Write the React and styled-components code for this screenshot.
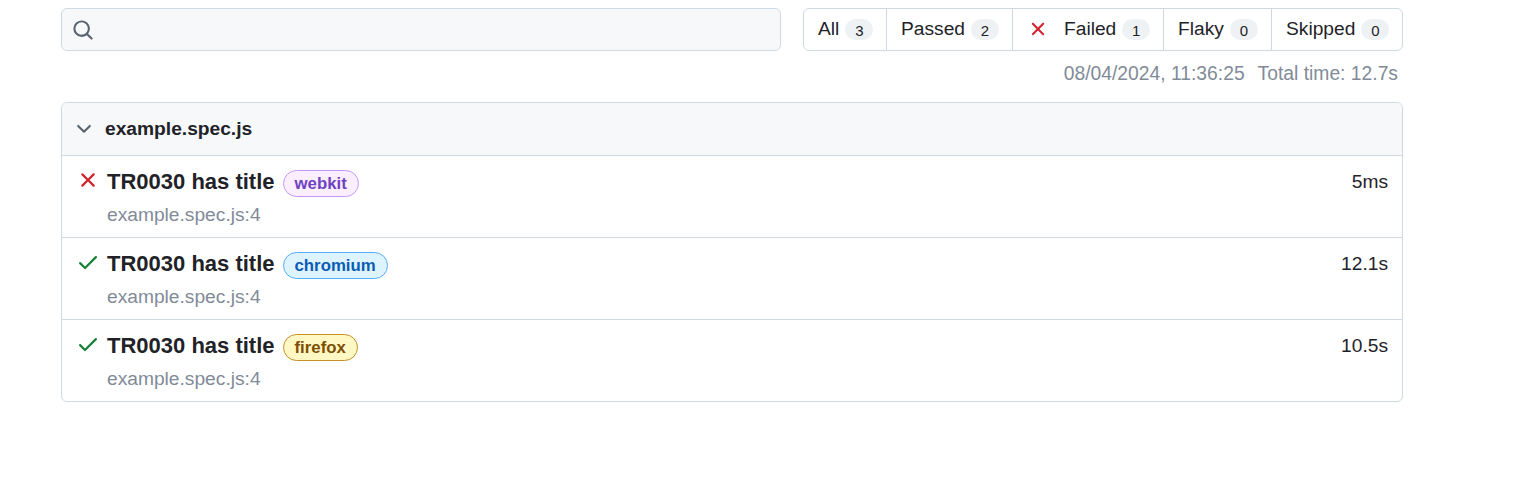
import styled, { createGlobalStyle } from "styled-components";

const GlobalStyle = createGlobalStyle`
  html, body {
    margin: 0;
    padding: 0;
    background: #fff;
    color: #1f2328;
    font-family: "Liberation Sans", Arial, sans-serif;
    font-size: 19.2px;
  }
`;

const Page = styled.div`
  width: 1342px;
  margin-left: 61px;
  padding-top: 8px;
`;

const TopBar = styled.div`
  display: flex;
  justify-content: space-between;
`;

const Search = styled.div`
  box-sizing: border-box;
  width: 720px;
  height: 43px;
  display: flex;
  align-items: center;
  padding-left: 10px;
  background: #f6f8fa;
  border: 1px solid #d1d9e0;
  border-radius: 6px;
  color: #59636e;
`;

const Filters = styled.div`
  box-sizing: border-box;
  width: 600px;
  height: 43px;
  display: flex;
  border: 1px solid #d1d9e0;
  border-radius: 6px;
`;

const Filter = styled.a`
  display: flex;
  align-items: center;
  flex: ${(p) => p.$width}px 0 0;
  box-sizing: border-box;
  padding-left: 14px;
  padding-bottom: 2px;
  font-size: 19.2px;
  color: #1f2328;
  & + & {
    border-left: 1px solid #d1d9e0;
  }
`;

const FilterIcon = styled.span`
  margin-right: 15px;
  color: #d1242f;
`;

const Counter = styled.span`
  display: inline-block;
  min-width: 28px;
  box-sizing: border-box;
  margin: 1px 0 0 6px;
  padding: 0 8px;
  height: 21px;
  line-height: 23px;
  text-align: center;
  font-size: 15px;
  border-radius: 11px;
  background: #eff2f5;
`;

const Meta = styled.div`
  display: flex;
  justify-content: flex-end;
  gap: 13px;
  padding: 11px 5px 0 0;
  height: 41px;
  box-sizing: border-box;
  line-height: 23px;
  font-size: 19.3px;
  color: #818b98;
`;

const Card = styled.div`
  margin-top: 10px;
  border: 1px solid #d1d9e0;
  border-radius: 6px;
  overflow: hidden;
`;

const CardHeader = styled.div`
  height: 52px;
  display: flex;
  align-items: center;
  padding: 0 0 1px 11px;
  box-sizing: border-box;
  gap: 10px;
  background: #f6f8fa;
  font-weight: 700;
  font-size: 19.2px;
  color: #1f2328;
  svg {
    color: #59636e;
  }
`;

const Row = styled.div`
  box-sizing: border-box;
  height: 82px;
  border-top: 1px solid #d1d9e0;
  padding: 11px 14px 0 14px;
  display: flex;
  justify-content: space-between;
`;

const StatusIcon = styled.span`
  display: block;
  width: 31px;
  flex: none;
  margin-top: 1px;
  color: ${(p) => (p.$ok ? "#1a7f37" : "#d1242f")};
`;

const RowMain = styled.div`
  flex: 1;
`;

const TitleLine = styled.div`
  display: flex;
  align-items: center;
  height: 30px;
`;

const Title = styled.span`
  font-size: 22px;
  font-weight: 700;
  color: #1f2328;
`;

const Badge = styled.span`
  margin: 3px 0 0 8px;
  box-sizing: border-box;
  height: 27px;
  line-height: 25px;
  padding: 0 11px;
  border-radius: 14px;
  font-size: 16.8px;
  font-weight: 700;
  color: ${(p) => p.$fg};
  background: ${(p) => p.$bg};
  border: 1px solid ${(p) => p.$line};
`;

const Location = styled.div`
  margin-top: 6px;
  line-height: 23px;
  font-size: 19.2px;
  color: #818b98;
`;

const Duration = styled.div`
  line-height: 30px;
  font-size: 19.2px;
  color: #1f2328;
`;

const Icon = ({ size, d }) => (
  <svg width={size} height={size} viewBox="0 0 16 16" fill="currentColor" style={{ display: "block" }}>
    <path d={d} />
  </svg>
);

const searchPath = "M10.68 11.74a6 6 0 0 1-7.922-8.982 6 6 0 0 1 8.982 7.922l3.04 3.04a.749.749 0 0 1-.326 1.275.749.749 0 0 1-.734-.215ZM11.5 7a4.499 4.499 0 1 0-8.997 0A4.499 4.499 0 0 0 11.5 7Z";
const xPath = "M3.72 3.72a.75.75 0 0 1 1.06 0L8 6.94l3.22-3.22a.749.749 0 0 1 1.275.326.749.749 0 0 1-.215.734L9.06 8l3.22 3.22a.749.749 0 0 1-.326 1.275.749.749 0 0 1-.734-.215L8 9.06l-3.22 3.22a.751.751 0 0 1-1.042-.018.751.751 0 0 1-.018-1.042L6.94 8 3.72 4.78a.75.75 0 0 1 0-1.06Z";
const checkPath = "M13.78 4.22a.75.75 0 0 1 0 1.06l-7.25 7.25a.75.75 0 0 1-1.06 0L2.22 9.28a.751.751 0 0 1 .018-1.042.751.751 0 0 1 1.042-.018L6 10.94l6.72-6.72a.75.75 0 0 1 1.06 0Z";
const chevronPath = "M12.78 5.22a.749.749 0 0 1-.001 1.06l-4.25 4.25a.749.749 0 0 1-1.06 0L3.22 6.28a.749.749 0 1 1 1.06-1.06L8 8.939l3.72-3.719a.749.749 0 0 1 1.06 0Z";

const tests = [
  { ok: false, browser: "webkit", time: "5ms", fg: "#6f42c1", bg: "#fbefff", line: "#c297ff" },
  { ok: true, browser: "chromium", time: "12.1s", fg: "#0a5bb5", bg: "#ddf4ff", line: "#54aeff" },
  { ok: true, browser: "firefox", time: "10.5s", fg: "#7d4e00", bg: "#fff8c5", line: "#c69026" },
];

const App = () => (
  <Page>
    <GlobalStyle />
    <TopBar>
      <Search>
        <Icon size={22} d={searchPath} />
      </Search>
      <Filters>
        <Filter $width={82}>All<Counter>3</Counter></Filter>
        <Filter $width={126}>Passed<Counter>2</Counter></Filter>
        <Filter $width={151}>
          <FilterIcon><Icon size={22} d={xPath} /></FilterIcon>
          Failed<Counter>1</Counter>
        </Filter>
        <Filter $width={108}>Flaky<Counter>0</Counter></Filter>
        <Filter $width={131}>Skipped<Counter>0</Counter></Filter>
      </Filters>
    </TopBar>
    <Meta>
      <span>08/04/2024, 11:36:25</span>
      <span>Total time: 12.7s</span>
    </Meta>
    <Card>
      <CardHeader>
        <Icon size={22} d={chevronPath} />
        example.spec.js
      </CardHeader>
      {tests.map((t) => (
        <Row key={t.browser}>
          <StatusIcon $ok={t.ok}>
            <Icon size={24} d={t.ok ? checkPath : xPath} />
          </StatusIcon>
          <RowMain>
            <TitleLine>
              <Title>TR0030 has title</Title>
              <Badge $fg={t.fg} $bg={t.bg} $line={t.line}>{t.browser}</Badge>
            </TitleLine>
            <Location>example.spec.js:4</Location>
          </RowMain>
          <Duration>{t.time}</Duration>
        </Row>
      ))}
    </Card>
  </Page>
);

export default App;
